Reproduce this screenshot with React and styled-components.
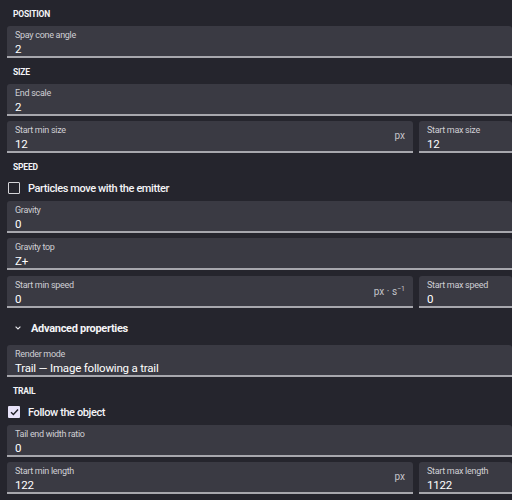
import styled, { createGlobalStyle } from 'styled-components';

const GlobalStyle = createGlobalStyle`
  html, body {
    margin: 0;
    padding: 0;
    background: #25252d;
  }
  body {
    font-family: Roboto, 'Liberation Sans', sans-serif;
    color: #f2f2f5;
  }
`;

const Page = styled.div`
  width: 512px;
  height: 500px;
  overflow: hidden;
  padding-left: 7px;
  box-sizing: border-box;
  background: #25252d;
`;

const SectionTitle = styled.div`
  height: 26px;
  line-height: 28px;
  padding-left: 6px;
  font-size: 8.5px;
  font-weight: 700;
  letter-spacing: -0.2px;
  text-transform: uppercase;
  color: #f4f4f7;
`;

const Stack = styled.div`
  display: flex;
  flex-direction: column;
  gap: ${({ $gap }) => $gap || 5}px;
`;

const Row = styled.div`
  display: grid;
  grid-template-columns: 1fr 93px;
  gap: 6px;
`;

const Field = styled.div`
  position: relative;
  height: 32px;
  box-sizing: border-box;
  padding: 3px 8px 0;
  background: #3a3a43;
  border-radius: 3px 3px 0 0;
  border-bottom: 2px solid #a7a7ad;
  margin-top: ${({ $mt }) => $mt || 0}px;
`;

const Label = styled.div`
  font-size: 9px;
  line-height: 12px;
  letter-spacing: -0.3px;
  color: #cfcfd4;
  white-space: nowrap;
`;

const Value = styled.div`
  font-size: 11.5px;
  line-height: 15px;
  margin-top: 1px;
  letter-spacing: -0.2px;
  color: #ffffff;
  white-space: nowrap;
`;

const Unit = styled.span`
  position: absolute;
  right: 8px;
  top: 9px;
  font-size: 10px;
  color: #c4c4ca;
  sup {
    font-size: 7px;
  }
`;

const CheckRow = styled.label`
  display: flex;
  align-items: center;
  gap: 8px;
  height: 18px;
  padding-left: 1px;
  margin-bottom: 4px;
  font-size: 11px;
  font-weight: 500;
  letter-spacing: -0.4px;
  color: #f4f4f7;
`;

const Box = styled.span`
  width: 12px;
  height: 12px;
  box-sizing: border-box;
  border-radius: 1px;
  border: ${({ $checked }) => ($checked ? 'none' : '1.5px solid #d4d4d8')};
  background: ${({ $checked }) => ($checked ? '#e7e2f8' : 'transparent')};
  display: flex;
  align-items: center;
  justify-content: center;
`;

const Advanced = styled.div`
  display: flex;
  align-items: center;
  gap: 10px;
  height: 34px;
  padding: 3px 0 0 8px;
  font-size: 11px;
  font-weight: 700;
  letter-spacing: -0.3px;
  color: #f4f4f7;
`;

const Checkbox = ({ checked, children }) => (
  <CheckRow>
    <Box $checked={checked}>
      {checked && (
        <svg width="9" height="8" viewBox="0 0 9 8">
          <path d="M1 4.2 L3.4 6.5 L8 1.5" fill="none" stroke="#1f1f26" strokeWidth="1.4" />
        </svg>
      )}
    </Box>
    {children}
  </CheckRow>
);

const Input = ({ label, value, unit, mt }) => (
  <Field $mt={mt}>
    <Label>{label}</Label>
    <Value>{value}</Value>
    {unit && <Unit>{unit}</Unit>}
  </Field>
);

const App = () => (
  <Page>
    <GlobalStyle />
    <SectionTitle>Position</SectionTitle>
    <Input label="Spay cone angle" value="2" />

    <SectionTitle>Size</SectionTitle>
    <Stack>
      <Input label="End scale" value="2" />
      <Row>
        <Input label="Start min size" value="12" unit="px" />
        <Input label="Start max size" value="12" />
      </Row>
    </Stack>

    <SectionTitle>Speed</SectionTitle>
    <Checkbox>Particles move with the emitter</Checkbox>
    <Stack>
      <Input label="Gravity" value="0" />
      <Input label="Gravity top" value="Z+" />
      <Row>
        <Input
          label="Start min speed"
          value="0"
          mt={1}
          unit={
            <>
              px · s<sup>−1</sup>
            </>
          }
        />
        <Input label="Start max speed" value="0" mt={1} />
      </Row>
    </Stack>

    <Advanced>
      <svg width="6" height="4" viewBox="0 0 6 4">
        <path d="M0.6 0.6 L3 3 L5.4 0.6" fill="none" stroke="#e8e8ec" strokeWidth="1.1" />
      </svg>
      Advanced properties
    </Advanced>
    <Input label="Render mode" value="Trail — Image following a trail" />

    <SectionTitle>Trail</SectionTitle>
    <Checkbox checked>Follow the object</Checkbox>
    <Stack>
      <Input label="Tail end width ratio" value="0" />
      <Row>
        <Input label="Start min length" value="122" unit="px" />
        <Input label="Start max length" value="1122" />
      </Row>
    </Stack>
  </Page>
);

export default App;
